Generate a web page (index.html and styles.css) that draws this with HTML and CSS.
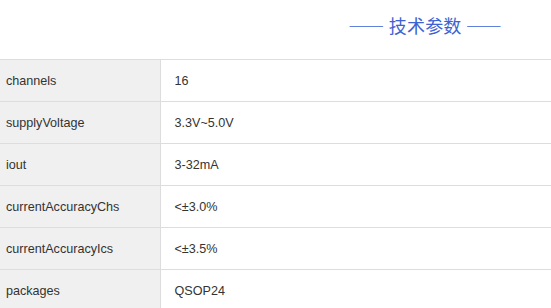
FILE: index.html
```html
<!DOCTYPE html>
<html lang="zh">
<head>
<meta charset="utf-8">
<link rel="stylesheet" href="styles.css">
</head>
<body>
<div class="header"><h2 class="title">—— 技术参数 ——</h2></div>
<table class="spec">
<tr><td class="key">channels</td><td class="val">16</td></tr>
<tr><td class="key">supplyVoltage</td><td class="val">3.3V~5.0V</td></tr>
<tr><td class="key">iout</td><td class="val">3-32mA</td></tr>
<tr><td class="key">currentAccuracyChs</td><td class="val">&lt;±3.0%</td></tr>
<tr><td class="key">currentAccuracyIcs</td><td class="val">&lt;±3.5%</td></tr>
<tr><td class="key">packages</td><td class="val">QSOP24</td></tr>
</table>
</body>
</html>
```
FILE: styles.css
```css
html, body { margin: 0; padding: 0; background: #fff; }
body { font-family: "Liberation Sans", Arial, sans-serif; color: #333; }
.header {
  height: 59px;
  display: flex;
  align-items: center;
  justify-content: flex-end;
  padding-right: 49px;
}
.title {
  margin: 0;
  font-family: "Noto Sans CJK SC", sans-serif;
  font-weight: normal;
  font-size: 18px;
  line-height: 1;
  color: #3c63d2;
  margin-top: -9px;
  letter-spacing: 0.2px;
}
.spec {
  width: 100%;
  border-collapse: collapse;
  font-size: 12.6px;
}
.spec td {
  height: 41px;
  padding: 0;
  border-top: 1px solid #ddd;
  border-bottom: 1px solid #ddd;
  vertical-align: middle;
}
.key {
  width: 160px;
  box-sizing: border-box;
  background: #f0f0f0;
  padding-left: 6px !important;
  border-right: 1px solid #ddd;
}
.val { padding-left: 14px !important; }
```
